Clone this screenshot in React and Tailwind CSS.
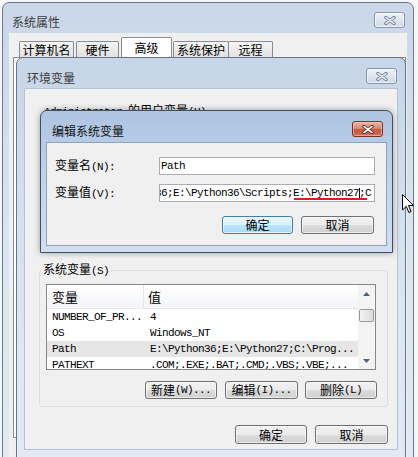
import React from "react";

const MONO = "font-['Liberation_Mono',monospace] text-[11px] tracking-[-0.6px]";

function T({ s }) {
  const parts = s.match(/[\x00-\x7F]+|[^\x00-\x7F]+/g) || [];
  return parts.map((p, i) =>
    /^[\x00-\x7F]/.test(p) ? (
      <span key={i} className="font-['Liberation_Mono',monospace] text-[11px] tracking-[-0.6px]">
        {p}
      </span>
    ) : (
      <span key={i}>{p}</span>
    )
  );
}

function XGlyph({ dark, light }) {
  return (
    <svg width="12" height="9" viewBox="0 0 12 9">
      <path d="M2 1.5 L10 7.5 M10 1.5 L2 7.5" stroke={dark} strokeWidth="3.4" strokeLinecap="round" fill="none" />
      <path d="M2 1.5 L10 7.5 M10 1.5 L2 7.5" stroke={light} strokeWidth="1.6" strokeLinecap="round" fill="none" />
    </svg>
  );
}

function CloseInactive({ className }) {
  return (
    <div
      className={
        "absolute w-[31px] h-[16px] rounded-[3px] border border-[#8796aa] bg-linear-to-b from-[#eef3f9] to-[#cfdae7] shadow-[inset_0_0_0_1px_rgba(255,255,255,0.6)] flex items-center justify-center " +
        className
      }
    >
      <XGlyph dark="#6d7d92" light="#dfe6ee" />
    </div>
  );
}

function CloseRed() {
  return (
    <div className="absolute right-[9px] top-[10px] w-[31px] h-[16px] rounded-[3px] border border-[#7a2d20] bg-[linear-gradient(180deg,#eab2a4_0%,#d98a78_45%,#c8553d_55%,#d0705a_100%)] shadow-[inset_0_0_0_1px_rgba(255,220,210,0.5)] flex items-center justify-center">
      <XGlyph dark="#5a1f15" light="#ffffff" />
    </div>
  );
}

function Btn({ w, h, def, label }) {
  return (
    <div
      className={
        w +
        " " +
        h +
        " shrink-0 rounded-[3px] border flex items-center justify-center leading-[14px] " +
        (def
          ? "border-[#3c7fb1] bg-[linear-gradient(180deg,#eaf6fd_0%,#d9f0fc_50%,#bee6fd_50%,#a7d9f5_100%)] shadow-[inset_0_0_0_1px_rgba(255,255,255,0.7)]"
          : "border-[#707070] bg-[linear-gradient(180deg,#f2f2f2_0%,#ebebeb_50%,#dddddd_50%,#cfcfcf_100%)] shadow-[inset_0_0_0_1px_rgba(255,255,255,0.6)]")
      }
    >
      <T s={label} />
    </div>
  );
}

function Tab({ w, sel, ml, label }) {
  return (
    <div
      className={
        w +
        " " +
        ml +
        " border border-b-0 border-[#898c95] rounded-t-[2px] flex items-center justify-center " +
        (sel ? "h-[20px] bg-white" : "h-[16px] bg-linear-to-b from-[#f5f5f5] to-[#e1e1e1]")
      }
    >
      {label}
    </div>
  );
}

function Tri({ up }) {
  return (
    <svg width="7" height="4" viewBox="0 0 7 4">
      <path d={up ? "M0 4 L3.5 0 L7 4 Z" : "M0 0 L3.5 4 L7 0 Z"} fill="#4d6185" />
    </svg>
  );
}

const rows = [
  ["NUMBER_OF_PR...", "4", false],
  ["OS", "Windows_NT", false],
  ["Path", "E:\\Python36;E:\\Python27;C:\\Prog...", true],
  ["PATHEXT", ".COM;.EXE;.BAT;.CMD;.VBS;.VBE;...", false],
];

export default function App() {
  return (
    <div className="relative w-[418px] h-[457px] overflow-hidden bg-[#f4f6f9] font-['Noto_Sans_CJK_SC',sans-serif] text-[12px] leading-[16px] text-black">
      {/* 系统属性 */}
      <div className="absolute left-[2px] top-[2px] w-[412px] h-[470px] rounded-t-[7px] border border-[#6b7a8c] bg-linear-to-b from-[#c9d7e8] via-[#dae4f0] to-[#e3eaf3] flex flex-col">
        <div className="relative h-[30px] shrink-0 pl-[9px] pt-[11px] text-[#3c3c3c]">
          系统属性
          <CloseInactive className="right-[8px] top-[9px]" />
        </div>
        <div className="flex-1 mx-[6px] bg-[#f0f0f0] flex flex-col">
          <div className="h-[24px] shrink-0 flex items-end pl-[10px]">
            <Tab w="w-[55px]" ml="ml-0" label="计算机名" />
            <Tab w="w-[43px]" ml="ml-[2px]" label="硬件" />
            <Tab w="w-[51px]" ml="ml-[2px]" sel label="高级" />
            <Tab w="w-[56px]" ml="ml-[1px]" label="系统保护" />
            <Tab w="w-[45px]" ml="ml-[-1px]" label="远程" />
          </div>
          <div className="ml-[4px] mr-[1px] h-[381px] border border-[#898c95] bg-white" />
        </div>
      </div>

      {/* 环境变量 */}
      <div className="absolute left-[16px] top-[57px] w-[390px] h-[402px] rounded-t-[7px] border border-[#66768a] bg-linear-to-b from-[#c6d5e8] via-[#d8e3f0] to-[#e2eaf4] flex flex-col">
        <div className="relative h-[30px] shrink-0 pl-[10px] pt-[12px] text-[#3c3c3c]">
          环境变量
          <CloseInactive className="right-[8px] top-[10px]" />
        </div>
        <div className="mx-[7px] h-[362px] shrink-0 bg-[#f0f0f0] border border-[#b4c2d3] flex flex-col">
          <div className="pt-[13px] pl-[19px] whitespace-nowrap">
            <T s="Administrator 的用户变量(U)" />
          </div>
          <fieldset className="mt-[141px] ml-[14px] w-[349px] border border-[#d5dfe5] rounded-[3px] pb-[7px]">
            <legend className="ml-[1px] px-[2px] leading-[16px]">
              <T s="系统变量(S)" />
            </legend>
            <div className="ml-[6px] mt-[5px] w-[330px] h-[86px] border border-[#828790] bg-white flex overflow-hidden">
              <div className="flex-1 overflow-hidden flex flex-col">
                <div className="h-[24px] shrink-0 flex border-b border-[#e3e6ea] bg-linear-to-b from-white to-[#f4f5f7] text-[13px]">
                  <div className="w-[97px] shrink-0 pl-[5px] flex items-center border-r border-[#e3e6ea]">变量</div>
                  <div className="pl-[4px] flex items-center">值</div>
                </div>
                {rows.map(([a, b, sel]) => (
                  <div key={a} className={"h-[16px] shrink-0 flex items-center whitespace-nowrap " + (sel ? "bg-[#e6e6e6]" : "")}>
                    <div className={"w-[97px] shrink-0 pl-[5px] " + MONO}>{a}</div>
                    <div className={"pl-[6px] " + MONO}>{b}</div>
                  </div>
                ))}
              </div>
              <div className="w-[17px] shrink-0 bg-[#f3f3f3] flex flex-col items-center">
                <div className="h-[17px] w-full flex items-center justify-center">
                  <Tri up />
                </div>
                <div className="mt-[7px] h-[13px] w-[15px] rounded-[2px] border border-[#979797] bg-linear-to-r from-[#f4f4f4] to-[#dcdcdc]" />
                <div className="flex-1" />
                <div className="h-[17px] w-full flex items-center justify-center">
                  <Tri />
                </div>
              </div>
            </div>
            <div className="mt-[11px] flex justify-end pr-[10px]">
              <Btn w="w-[72px]" h="h-[18px]" label="新建(W)..." />
              <div className="w-[8px]" />
              <Btn w="w-[73px]" h="h-[18px]" label="编辑(I)..." />
              <div className="w-[7px]" />
              <Btn w="w-[72px]" h="h-[18px]" label="删除(L)" />
            </div>
          </fieldset>
          <div className="mt-[18px] flex justify-end pr-[9px]">
            <Btn w="w-[72px]" h="h-[19px]" label="确定" />
            <div className="w-[8px]" />
            <Btn w="w-[73px]" h="h-[19px]" label="取消" />
          </div>
        </div>
      </div>

      {/* 编辑系统变量 */}
      <div className="absolute left-[40px] top-[110px] w-[353px] h-[143px] rounded-t-[7px] border border-[#3e5068] bg-linear-to-b from-[#adc4e2] via-[#c2d4eb] to-[#d0dff0] flex flex-col shadow-[0_0_6px_rgba(0,0,0,0.35)]">
        <div className="relative h-[31px] shrink-0 pl-[11px] pt-[12px] text-[#111]">
          编辑系统变量
          <CloseRed />
        </div>
        <div className="mx-[5px] h-[104px] shrink-0 bg-[#f0f0f0] border border-[#8fa3bd] flex flex-col">
          <div className="mt-[14px] h-[18px] flex items-center">
            <div className="w-[112px] shrink-0 pl-[8px] whitespace-nowrap">
              <T s="变量名(N):" />
            </div>
            <div className="w-[216px] h-[18px] border border-[#abadb3] bg-white flex items-center pl-[1px] overflow-hidden whitespace-nowrap">
              <span className={MONO}>Path</span>
            </div>
          </div>
          <div className="mt-[9px] h-[18px] flex items-center">
            <div className="w-[112px] shrink-0 pl-[8px] whitespace-nowrap">
              <T s="变量值(V):" />
            </div>
            <div className="w-[216px] h-[18px] border border-[#abadb3] bg-white flex items-center pl-[1px] overflow-hidden whitespace-nowrap">
              <span className={"ml-[-6px] " + MONO}>
                {"36;E:\\Python36\\Scripts;"}
                <span className="relative">
                  {"E:\\Python27"}
                  <span className="absolute left-[1px] right-[-8px] bottom-[-1px] h-[2px] bg-[#d81e1e]" />
                  <span className="absolute right-[-1px] top-[1px] bottom-[1px] w-px bg-black" />
                </span>
                {";C"}
              </span>
            </div>
          </div>
          <div className="mt-[14px] flex justify-end pr-[12px]">
            <Btn w="w-[71px]" h="h-[18px]" def label="确定" />
            <div className="w-[8px]" />
            <Btn w="w-[73px]" h="h-[18px]" label="取消" />
          </div>
        </div>
      </div>

      {/* mouse cursor */}
      <svg className="absolute left-[402px] top-[194px]" width="12" height="20" viewBox="0 0 12 20">
        <path d="M0.5 0.5 L0.5 16 L4.3 12.3 L6.8 18.5 L9 17.6 L6.5 11.5 L11.5 11.5 Z" fill="#fff" stroke="#000" strokeWidth="1" strokeLinejoin="miter" />
      </svg>
    </div>
  );
}
